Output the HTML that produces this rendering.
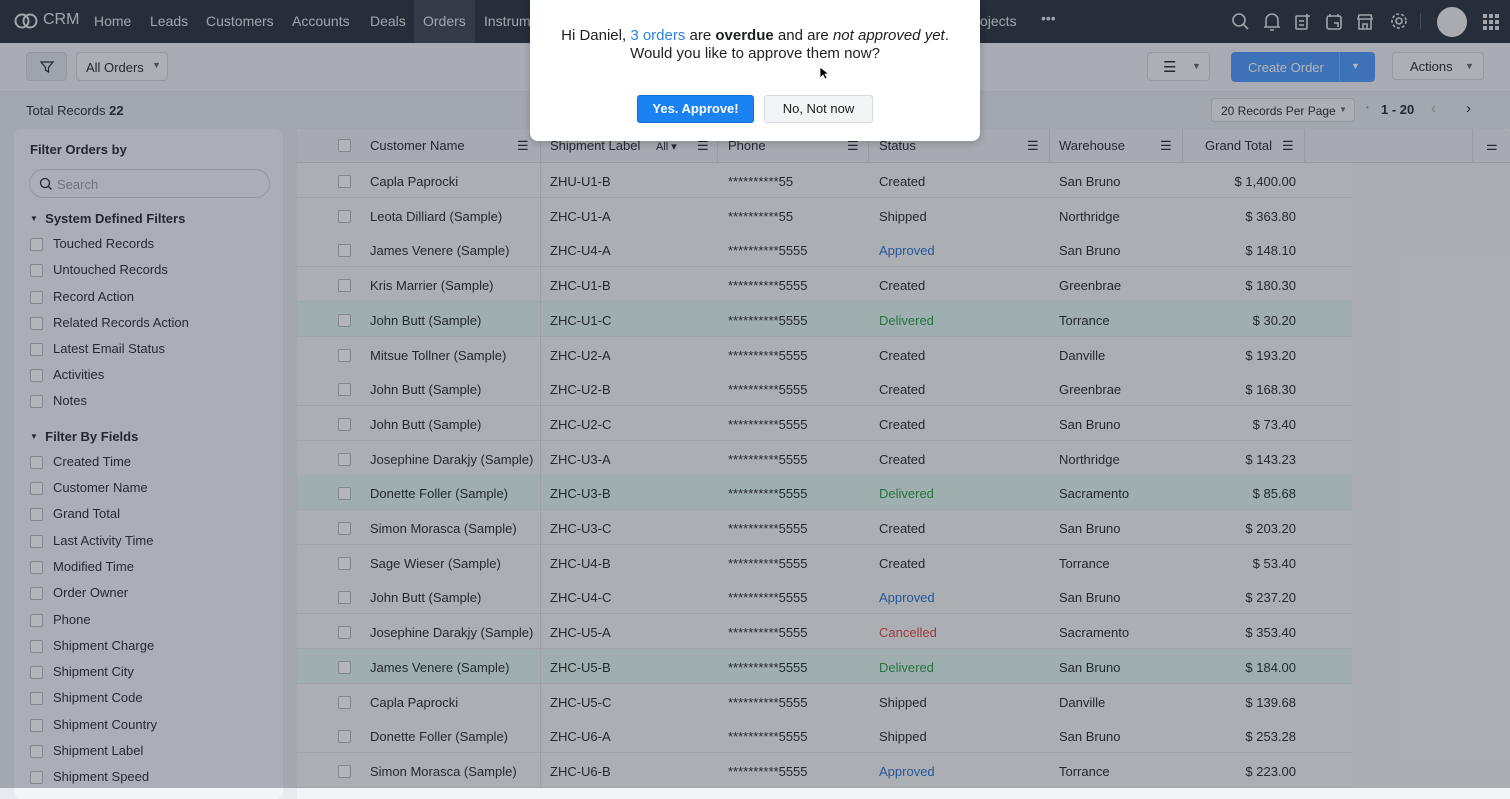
<!DOCTYPE html>
<html><head><meta charset="utf-8"><style>
*{box-sizing:border-box;margin:0;padding:0}
body{width:1510px;height:788px;overflow:hidden;background:#e7ebf0;font-family:"Liberation Sans",sans-serif;color:#2a2e35;position:relative;font-size:13px}
.abs{position:absolute}
.nav{left:0;top:0;width:1510px;height:43px;background:#2e3643}
.nav span{position:absolute;top:13px;color:#e4e7ec;font-size:14px}
.tb{left:0;top:43px;width:1510px;height:49px;background:#f0f3f8;border-bottom:1px solid #e0e3e8}
.btn{position:absolute;border:1px solid #d2d6dc;border-radius:4px;background:#f5f7fa}
.side{left:14px;top:129px;width:269px;height:670px;background:#f3f5f9;border-radius:8px}
.cb{position:absolute;width:13px;height:13px;border:1px solid #b8bcc3;border-radius:2px;background:#fff}
.si{position:absolute;left:53px;font-size:13px;color:#2e323a}
.tbl{left:297px;top:129px;width:1213px;height:670px;background:#f2f4f7}
.row{position:absolute;left:297px;width:1055px;height:35px;border-bottom:1px solid #e3e6ea;background:#f4f5f7}
.row span{position:absolute;top:11px;font-size:13px;color:#2a2e35}
.hd span{position:absolute;top:9px;font-size:13px;color:#2a2e35}
.ov{left:0;top:0;width:1510px;height:788px;background:rgba(25,30,40,0.33)}
</style></head><body>
<div class="abs nav">
<svg class="abs" style="left:14px;top:12px" width="24" height="18" viewBox="0 0 24 18"><circle cx="8" cy="9" r="6.5" fill="none" stroke="#e4e7ec" stroke-width="2"/><circle cx="16" cy="9" r="6.5" fill="none" stroke="#e4e7ec" stroke-width="2"/></svg>
<span style="left:43px;top:11px;font-size:16px">CRM</span>
<span style="left:94px">Home</span><span style="left:150px">Leads</span><span style="left:206px">Customers</span><span style="left:292px">Accounts</span><span style="left:370px">Deals</span>
<div class="abs" style="left:414px;top:0;width:61px;height:43px;background:#414a59"></div>
<span style="left:423px">Orders</span><span style="left:484px">Instrum</span>
<span style="left:980px">ojects</span><span style="left:1041px;top:10px">•••</span>
<svg class="abs" style="left:1230px;top:11px" width="180" height="22" viewBox="0 0 180 22" fill="none" stroke="#e4e7ec" stroke-width="1.6"><circle cx="9" cy="9" r="6"/><path d="M13 13l5 5"/><path d="M36 16V9a6 6 0 0112 0v7zM34 16h16M40 19h4"/><rect x="66" y="5" width="11" height="13" rx="1"/><path d="M69 10h5M69 14h5M77 3v5M75 5h5"/><rect x="97" y="5" width="14" height="13" rx="2"/><path d="M100 3v3M108 3v3M104 12h4v4"/><path d="M128 8h14l-1-4h-12zM129 8v10h12V8M133 18v-5h4v5"/><circle cx="169" cy="10" r="3"/><circle cx="169" cy="10" r="7" stroke-dasharray="3 2"/></svg>
<div class="abs" style="left:1420px;top:13px;width:1px;height:16px;background:#5a6272"></div>
<div class="abs" style="left:1437px;top:7px;width:30px;height:30px;border-radius:50%;background:#f0f1f3"></div>
<div class="abs" style="left:1483px;top:14px;width:16px;height:16px;background:repeating-linear-gradient(90deg,#e4e7ec 0 4px,transparent 4px 6px);-webkit-mask:repeating-linear-gradient(0deg,#000 0 4px,transparent 4px 6px)"></div>
</div>
<div class="abs tb">
<div class="btn" style="left:26px;top:9px;width:41px;height:29px;background:#e2e6ec"><svg style="position:absolute;left:13px;top:7px" width="14" height="14" viewBox="0 0 14 14"><path d="M1 2h12L8.5 7.5V12L5.5 10V7.5z" fill="none" stroke="#2a2e35" stroke-width="1.2"/></svg></div>
<div class="btn" style="left:76px;top:9px;width:92px;height:29px"><span style="position:absolute;left:9px;top:7px;font-size:13px;color:#2a2e35">All Orders</span><span style="position:absolute;left:75px;top:7px;font-size:9px;color:#666">▼</span></div>
<div class="btn" style="left:1147px;top:9px;width:63px;height:29px"><span style="position:absolute;left:15px;top:5px;font-size:15px;color:#2a2e35">☰</span><span style="position:absolute;left:44px;top:8px;font-size:9px;color:#666">▼</span></div>
<div class="abs" style="left:1231px;top:9px;width:144px;height:30px;background:#4f9cff;border-radius:4px"><span style="position:absolute;left:17px;top:8px;color:#fff;font-size:13px">Create Order</span><div style="position:absolute;left:108px;top:0;width:1px;height:30px;background:#7ab3ff"></div><span style="position:absolute;left:120px;top:9px;font-size:9px;color:#fff">▼</span></div>
<div class="btn" style="left:1392px;top:9px;width:92px;height:28px"><span style="position:absolute;left:17px;top:6px;color:#2a2e35">Actions</span><span style="position:absolute;left:72px;top:8px;font-size:9px;color:#666">▼</span></div>
</div>
<div class="abs" style="left:26px;top:103px;font-size:13px;color:#2e323a">Total Records <b>22</b></div>
<div class="btn abs" style="left:1211px;top:98px;width:144px;height:24px"><span style="position:absolute;left:9px;top:5px;font-size:12px;color:#2e323a">20 Records Per Page</span><span style="position:absolute;left:127px;top:6px;font-size:8px;color:#666">▼</span></div>
<div class="abs" style="left:1366px;top:103px;font-size:8px;color:#999">•</div>
<div class="abs" style="left:1381px;top:102px;font-weight:bold;font-size:13px">1 - 20</div>
<div class="abs" style="left:1431px;top:100px;font-size:15px;color:#aaa">‹</div>
<div class="abs" style="left:1466px;top:100px;font-size:15px;color:#2a2e35">›</div>

<div class="abs side"></div>
<div class="abs" style="left:30px;top:142px;font-weight:bold;font-size:13px">Filter Orders by</div>
<div class="abs" style="left:29px;top:169px;width:241px;height:29px;border:1px solid #cfd3d9;border-radius:15px;background:#f3f5f9"><svg style="position:absolute;left:9px;top:7px" width="14" height="14"><circle cx="6" cy="6" r="4.5" fill="none" stroke="#2a2e35" stroke-width="1.3"/><path d="M9.5 9.5l3 3" stroke="#2a2e35" stroke-width="1.3"/></svg><span style="position:absolute;left:27px;top:7px;color:#9a9ea5">Search</span></div>
<div class="abs" style="left:30px;top:211px;font-weight:bold"><span style="font-size:8px;position:relative;top:-2px">▼</span>&nbsp; System Defined Filters</div>
<div class="abs" style="left:30px;top:429px;font-weight:bold"><span style="font-size:8px;position:relative;top:-2px">▼</span>&nbsp; Filter By Fields</div>
<div id="sb"></div>

<div class="abs tbl"></div>
<div class="abs hd" style="left:297px;top:129px;width:1213px;height:34px;background:#edf0f5;border-bottom:1px solid #d8dbe0;border-radius:8px 8px 0 0">
<div class="cb" style="left:41px;top:10px"></div>
<span style="left:73px">Customer Name</span><span style="left:220px">☰</span>
<div style="position:absolute;left:243px;top:0;width:1px;height:34px;background:#dadde2"></div>
<span style="left:253px">Shipment Label</span><span style="left:359px;font-size:11px;top:11px">All ▾</span><span style="left:400px">☰</span>
<div style="position:absolute;left:420px;top:0;width:1px;height:34px;background:#dadde2"></div>
<span style="left:431px">Phone</span><span style="left:550px">☰</span>
<div style="position:absolute;left:571px;top:0;width:1px;height:34px;background:#dadde2"></div>
<span style="left:582px">Status</span><span style="left:730px">☰</span>
<div style="position:absolute;left:752px;top:0;width:1px;height:34px;background:#dadde2"></div>
<span style="left:762px">Warehouse</span><span style="left:863px">☰</span>
<div style="position:absolute;left:885px;top:0;width:1px;height:34px;background:#dadde2"></div>
<span style="left:908px">Grand Total</span><span style="left:985px">☰</span>
<div style="position:absolute;left:1007px;top:0;width:1px;height:34px;background:#dadde2"></div>
<div style="position:absolute;left:1175px;top:0;width:1px;height:34px;background:#dadde2"></div>
<span style="left:1189px">⚌</span>
</div>
<div id="rows"></div>
<div class="abs" style="left:540px;top:163px;width:1px;height:625px;background:#e0e3e7"></div>

<div class="abs ov"></div>

<div class="abs" style="left:530px;top:0;width:450px;height:141px;background:#fff;border-radius:0 0 8px 8px;box-shadow:0 2px 8px rgba(0,0,0,.2)">
<div style="position:absolute;left:0;top:27px;width:450px;text-align:center;font-size:15px;line-height:18px;color:#1d1f23">Hi Daniel, <span style="color:#2a84e0">3 orders</span> are <b>overdue</b> and are <i>not approved yet</i>.<br>Would you like to approve them now?</div>
<svg style="position:absolute;left:289px;top:66px" width="10" height="14" viewBox="0 0 10 14"><path d="M1 1v11l3-3 2 4 2-1-2-4h4z" fill="#000" stroke="#fff" stroke-width=".8"/></svg>
<div style="position:absolute;left:107px;top:95px;width:117px;height:28px;background:#1a82f2;border:1px solid #1270d8;border-radius:3px;color:#fff;font-weight:bold;font-size:13px;text-align:center;line-height:26px">Yes. Approve!</div>
<div style="position:absolute;left:234px;top:95px;width:109px;height:28px;background:#f3f4f6;border:1px solid #d5d8dd;border-radius:3px;color:#1d1f23;font-size:13px;text-align:center;line-height:26px">No, Not now</div>
</div>

<script>
var sb=[["Touched Records",244],["Untouched Records",270],["Record Action",297],["Related Records Action",323],["Latest Email Status",349],["Activities",375],["Notes",401],["Created Time",462],["Customer Name",488],["Grand Total",514],["Last Activity Time",541],["Modified Time",567],["Order Owner",593],["Phone",620],["Shipment Charge",646],["Shipment City",672],["Shipment Code",698],["Shipment Country",725],["Shipment Label",751],["Shipment Speed",777]];
var h="";sb.forEach(function(s){h+='<div class="cb" style="left:30px;top:'+(s[1]-6)+'px"></div><div class="si" style="top:'+(s[1]-8)+'px">'+s[0]+'</div>';});
document.getElementById("sb").innerHTML=h;
var R=[["Capla Paprocki","ZHU-U1-B","**********55","Created","San Bruno","$ 1,400.00"],
["Leota Dilliard (Sample)","ZHC-U1-A","**********55","Shipped","Northridge","$ 363.80"],
["James Venere (Sample)","ZHC-U4-A","**********5555","Approved","San Bruno","$ 148.10"],
["Kris Marrier (Sample)","ZHC-U1-B","**********5555","Created","Greenbrae","$ 180.30"],
["John Butt (Sample)","ZHC-U1-C","**********5555","Delivered","Torrance","$ 30.20"],
["Mitsue Tollner (Sample)","ZHC-U2-A","**********5555","Created","Danville","$ 193.20"],
["John Butt (Sample)","ZHC-U2-B","**********5555","Created","Greenbrae","$ 168.30"],
["John Butt (Sample)","ZHC-U2-C","**********5555","Created","San Bruno","$ 73.40"],
["Josephine Darakjy (Sample)","ZHC-U3-A","**********5555","Created","Northridge","$ 143.23"],
["Donette Foller (Sample)","ZHC-U3-B","**********5555","Delivered","Sacramento","$ 85.68"],
["Simon Morasca (Sample)","ZHC-U3-C","**********5555","Created","San Bruno","$ 203.20"],
["Sage Wieser (Sample)","ZHC-U4-B","**********5555","Created","Torrance","$ 53.40"],
["John Butt (Sample)","ZHC-U4-C","**********5555","Approved","San Bruno","$ 237.20"],
["Josephine Darakjy (Sample)","ZHC-U5-A","**********5555","Cancelled","Sacramento","$ 353.40"],
["James Venere (Sample)","ZHC-U5-B","**********5555","Delivered","San Bruno","$ 184.00"],
["Capla Paprocki","ZHC-U5-C","**********5555","Shipped","Danville","$ 139.68"],
["Donette Foller (Sample)","ZHC-U6-A","**********5555","Shipped","San Bruno","$ 253.28"],
["Simon Morasca (Sample)","ZHC-U6-B","**********5555","Approved","Torrance","$ 223.00"]];
var col={Approved:"#2f72d0",Delivered:"#2e9e4e",Cancelled:"#e04848"};
h="";R.forEach(function(r,i){var t=163+i*34.7;var bg=r[3]=="Delivered"?"background:#e1f7f4;":"";
h+='<div class="row" style="top:'+t+'px;'+bg+'"><div class="cb" style="left:41px;top:12px"></div><span style="left:73px">'+r[0]+'</span><span style="left:253px">'+r[1]+'</span><span style="left:431px">'+r[2]+'</span><span style="left:582px;color:'+(col[r[3]]||"#2a2e35")+'">'+r[3]+'</span><span style="left:762px">'+r[4]+'</span><span style="right:56px">'+r[5]+'</span></div>';});
document.getElementById("rows").innerHTML=h;
</script>
</body></html>
